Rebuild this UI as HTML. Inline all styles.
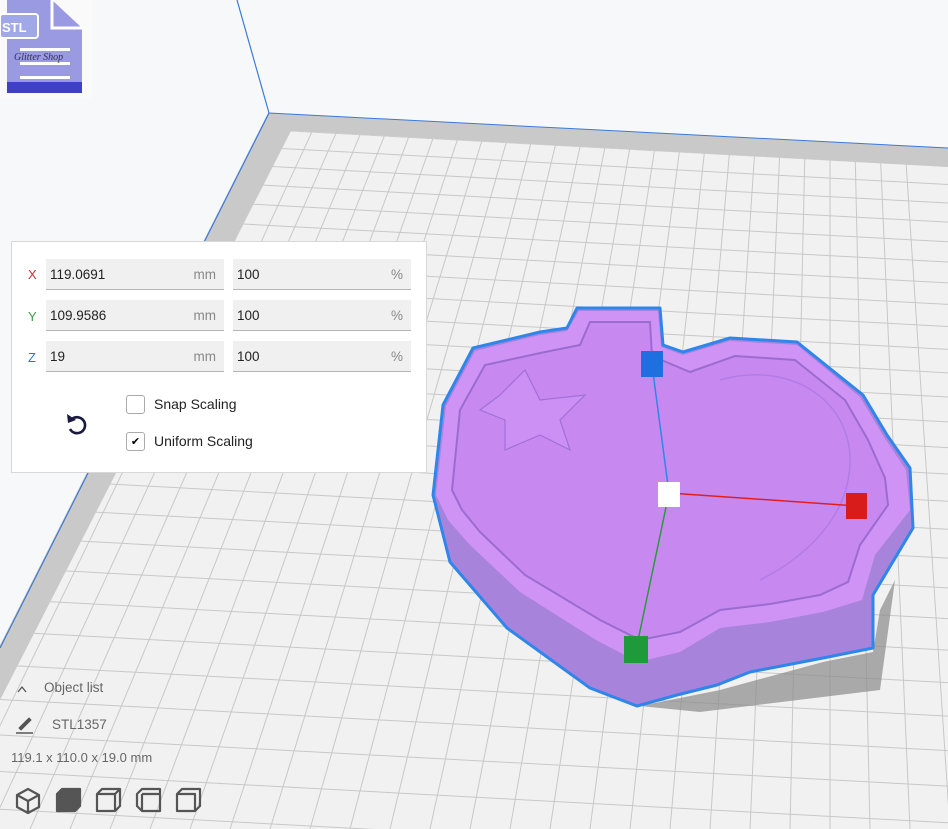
<!DOCTYPE html>
<html style="overflow:hidden;width:948px;height:829px"><head><meta charset="utf-8"><style>
body{margin:0;width:948px;height:829px;overflow:hidden;background:#f7f8f9;font-family:"Liberation Sans","DejaVu Sans",sans-serif;position:relative}
svg{position:absolute;left:0;top:0}
.panel{position:absolute;left:11px;top:241px;width:416px;height:232px;background:#fff;border:1px solid #d8d8d8;box-sizing:border-box}
.lbl{position:absolute;left:16px;font-size:13px}
.f{position:absolute;height:31px;background:#f0f0f0;border-bottom:1px solid #b5b5b5;font-size:13.5px;color:#222;line-height:31px;box-sizing:border-box;padding-left:4px}
.f span{position:absolute;right:8px;color:#888}
.cb{position:absolute;left:114px;width:19px;height:19px;border:1px solid #aaa;border-radius:3px;box-sizing:border-box;background:#fff;font-size:11px;text-align:center;line-height:18px}
.ct{position:absolute;left:142px;font-size:14px;color:#222}
.bt{position:absolute;font-size:13.5px;color:#666}
</style></head><body>
<svg width="948" height="829" viewBox="0 0 948 829">
<defs><clipPath id="pl"><polygon points="291,131 948,167 948,829 0,829 0,700"/></clipPath></defs>
<polygon points="268,113 948,148 948,829 0,829 0,645" fill="#c9c9c9"/>
<polygon points="291,131 948,167 948,829 0,829 0,700" fill="#f1f1f1"/>
<line x1="237" y1="0" x2="269" y2="113" stroke="#3a7ad8" stroke-width="1.2"/>
<line x1="269" y1="113" x2="0" y2="648" stroke="#3a7ad8" stroke-width="1.2"/>
<line x1="269" y1="113" x2="948" y2="148" stroke="#3a7ad8" stroke-width="1"/>
<g id="grid" clip-path="url(#pl)" stroke="#c8c8c8" stroke-width="1"></g>
<polygon points="640,706 720,690 823,662 873,652 880,610 895,580 880,690 700,712" fill="#8a8a8a" opacity="0.7"/>
<path d="M577,308 L660,308 L663,345 L683,352 L730,338 L797,342 L863,395 L887,435 L910,468 L913,528 L873,595 L873,648 L823,658 L750,672 L717,685 L677,695 L637,706 L590,688 L507,628 L450,562 L433,495 L443,405 L473,348 L540,332 L567,328 Z" fill="#a883dc" stroke="#2f86ea" stroke-width="3" stroke-linejoin="round"/>
<path d="M579,311 L658,311 L661,347 L683,355 L730,341 L797,345 L860,397 L884,437 L906,470 L910,510 L875,555 L862,600 L823,612 L770,622 L720,628 L680,652 L638,662 L596,640 L520,592 L470,545 L448,520 L436,495 L446,406 L475,351 L540,335 L567,331 Z" fill="#cf93f6"/>
<path d="M590,322 L650,322 L652,356 L690,372 L735,356 L795,360 L845,400 L868,440 L885,478 L888,505 L860,545 L848,582 L820,595 L770,604 L720,610 L680,632 L640,640 L600,620 L525,575 L480,532 L462,510 L452,490 L460,410 L485,365 L545,352 L580,345 Z" fill="#c789f0" stroke="#9b6cd0" stroke-width="2"/>
<path d="M500,395 L525,370 L540,400 L585,395 L560,420 L570,450 L540,435 L505,450 L505,420 L480,410 Z" fill="#cc90f4" stroke="#a070d8" stroke-width="1.2"/>
<path d="M720,380 C790,360 850,400 850,460 C850,520 800,560 760,580" fill="none" stroke="#b27ce6" stroke-width="1.5"/>
<line x1="652" y1="365" x2="669" y2="493" stroke="#2f86ea" stroke-width="1.5"/>
<line x1="669" y1="493" x2="857" y2="506" stroke="#e02020" stroke-width="1.5"/>
<line x1="669" y1="493" x2="636" y2="650" stroke="#2a9a40" stroke-width="1.5"/>
<rect x="641" y="351" width="22" height="26" fill="#1f6fe0"/>
<rect x="658" y="482" width="22" height="25" fill="#fff"/>
<rect x="846" y="493" width="21" height="26" fill="#d81c1c"/>
<rect x="624" y="636" width="24" height="27" fill="#1f9a3a"/>
<rect x="0" y="0" width="92" height="98" fill="#fafafa"/>
<path d="M7,0 H52 L82,28 V88 Q82,93 77,93 H12 Q7,93 7,88 Z" fill="#9a9ae2"/>
<rect x="7" y="82" width="75" height="11" fill="#3f40c4"/>
<rect x="20" y="48" width="50" height="3" fill="#fff"/><rect x="20" y="62" width="50" height="3" fill="#fff"/><rect x="20" y="76" width="50" height="3" fill="#fff"/>
<path d="M52,0 V28 H82" fill="none" stroke="#fff" stroke-width="3"/>
<rect x="0" y="14" width="38" height="24" rx="3" fill="#a0a8e8" stroke="#fff" stroke-width="2"/>
<text x="2" y="32" font-size="13" font-weight="bold" fill="#fff" font-family="Liberation Sans">STL</text>
<text x="14" y="60" font-size="10" font-style="italic" fill="#334" font-family="Liberation Serif">Glitter Shop</text>
<g fill="none" stroke="#555" stroke-width="2.2" stroke-linejoin="round">
<path d="M28,789 L39,795 V807 L28,813 L17,807 V795 Z M17,795 L28,801 L39,795 M28,801 V813"/>
<path d="M57,794 L62,789 H80 V806 L75,811 H57 Z" fill="#555"/>
<path d="M97,794 L102,789 H120 V806 L115,811 H97 Z M97,794 H115 V811 M115,794 L120,789" />
<path d="M137,794 L142,789 H160 V811 H142 L137,806 Z M142,794 H160 M142,794 V811"/>
<path d="M177,794 L182,789 H200 V806 L195,811 H177 Z M177,794 H195 V811"/>
<path d="M18,692 L22,687 L26,692" stroke-width="1.3"/>
<path d="M19,728 L29,718 L31,720 L21,730 Z" fill="#555" stroke-width="1"/><line x1="16" y1="733" x2="33" y2="733" stroke-width="1.5"/>
</g>
</svg>
<div class="panel">
<div class="lbl" style="top:25px;color:#d03030">X</div>
<div class="lbl" style="top:67px;color:#3aa04a">Y</div>
<div class="lbl" style="top:108px;color:#2f6fd0">Z</div>
<div class="f" style="left:34px;top:17px;width:178px">119.0691<span>mm</span></div>
<div class="f" style="left:221px;top:17px;width:178px">100<span>%</span></div>
<div class="f" style="left:34px;top:58px;width:178px">109.9586<span>mm</span></div>
<div class="f" style="left:221px;top:58px;width:178px">100<span>%</span></div>
<div class="f" style="left:34px;top:99px;width:178px">19<span>mm</span></div>
<div class="f" style="left:221px;top:99px;width:178px">100<span>%</span></div>
<div class="cb" style="top:153px"></div><div class="ct" style="top:154px">Snap Scaling</div>
<div class="cb" style="top:190px">✔</div><div class="ct" style="top:191px">Uniform Scaling</div>
<svg style="left:52px;top:168px" width="26" height="28" viewBox="0 0 26 28"><path d="M8,9 A8,8 0 1 1 6,19" fill="none" stroke="#1a1a40" stroke-width="2.6"/><path d="M3,4 L4,13 L12,10 Z" fill="#1a1a40"/></svg>
</div>
<div class="bt" style="left:44px;top:680px">Object list</div>
<div class="bt" style="left:52px;top:717px">STL1357</div>
<div class="bt" style="left:11px;top:750px;font-size:13px">119.1 x 110.0 x 19.0 mm</div>
<script>
var g=document.getElementById('grid'),s='';
var y=131;while(y<860){var y2=y+(948-291)*0.054;s+='<line x1="0" y1="'+(y-291*0.054)+'" x2="948" y2="'+y2+'"/>';y+=18+0.03*(y-131);}
for(var k=-40;k<4;k++){var xb=830+k*40;s+='<line x1="830" y1="-990" x2="'+xb+'" y2="829"/>';}
g.innerHTML=s;
</script>
</body></html>
